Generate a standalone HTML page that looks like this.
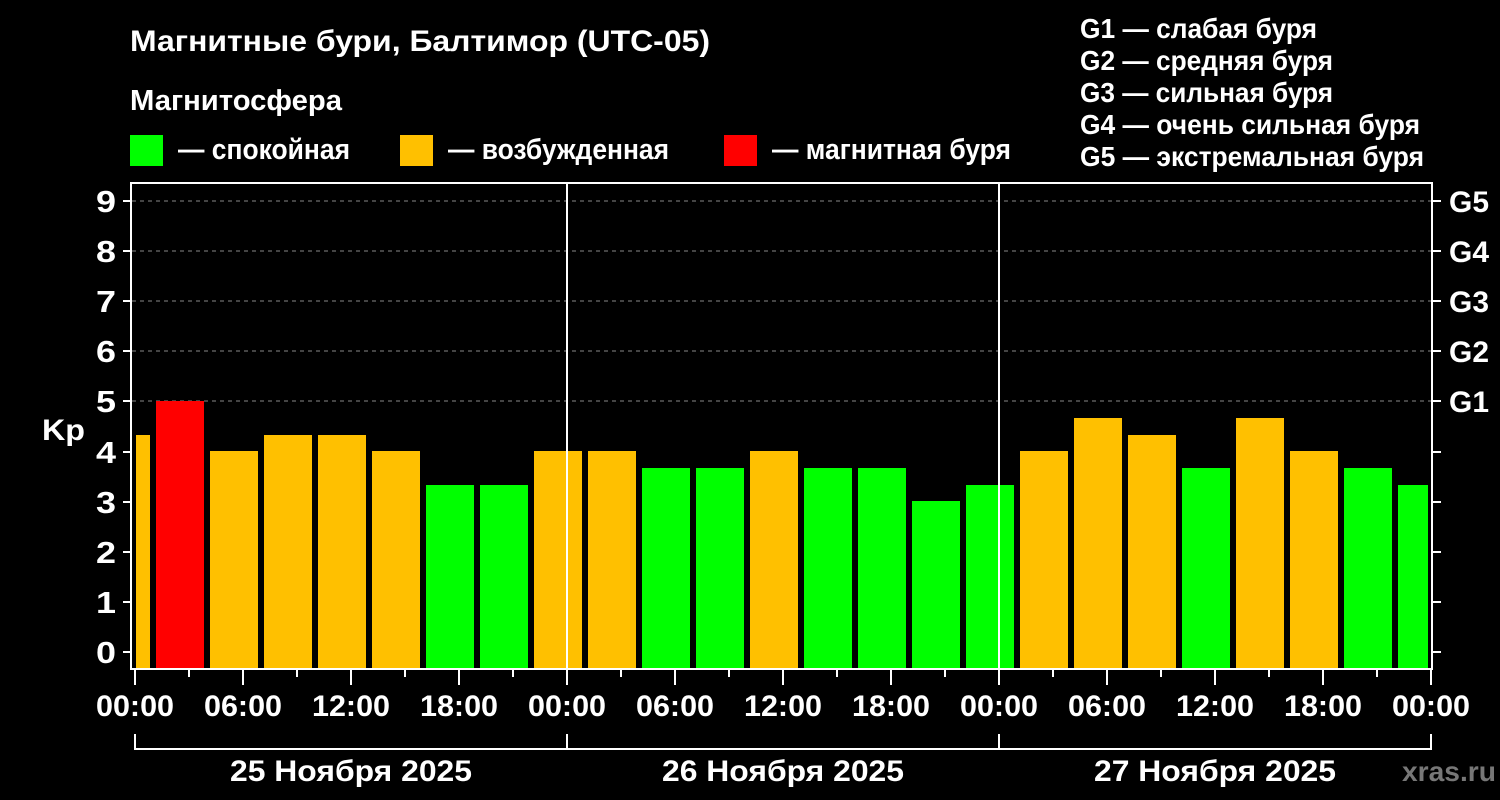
<!DOCTYPE html>
<html><head><meta charset="utf-8"><style>
html,body{margin:0;padding:0;background:#000;width:1500px;height:800px;overflow:hidden}
svg{display:block}
text{font-family:"Liberation Sans",Arial,sans-serif;font-weight:bold;fill:#fff}
</style></head><body>
<svg width="1500" height="800" viewBox="0 0 1500 800" xmlns="http://www.w3.org/2000/svg">
<rect width="1500" height="800" fill="#000"/>
<text x="130" y="51" font-size="30" textLength="580" lengthAdjust="spacingAndGlyphs">Магнитные бури, Балтимор (UTC-05)</text>
<text x="130" y="110" font-size="29" textLength="212" lengthAdjust="spacingAndGlyphs">Магнитосфера</text>
<rect x="130" y="135" width="33" height="31" fill="#00ff00"/>
<text x="178" y="159" font-size="29" textLength="172" lengthAdjust="spacingAndGlyphs">— спокойная</text>
<rect x="400" y="135" width="33" height="31" fill="#ffc000"/>
<text x="448" y="159" font-size="29" textLength="221" lengthAdjust="spacingAndGlyphs">— возбужденная</text>
<rect x="724" y="135" width="33" height="31" fill="#ff0000"/>
<text x="772" y="159" font-size="29" textLength="239" lengthAdjust="spacingAndGlyphs">— магнитная буря</text>
<g font-size="28">
<text x="1080" y="38" textLength="237" lengthAdjust="spacingAndGlyphs">G1 — слабая буря</text>
<text x="1080" y="70" textLength="253" lengthAdjust="spacingAndGlyphs">G2 — средняя буря</text>
<text x="1080" y="102" textLength="253" lengthAdjust="spacingAndGlyphs">G3 — сильная буря</text>
<text x="1080" y="134" textLength="340" lengthAdjust="spacingAndGlyphs">G4 — очень сильная буря</text>
<text x="1080" y="166" textLength="344" lengthAdjust="spacingAndGlyphs">G5 — экстремальная буря</text>
</g>
<g stroke="#888" stroke-width="1" stroke-dasharray="4,4">
<line x1="132" y1="201" x2="1431" y2="201"/>
<line x1="132" y1="251" x2="1431" y2="251"/>
<line x1="132" y1="301" x2="1431" y2="301"/>
<line x1="132" y1="351" x2="1431" y2="351"/>
<line x1="132" y1="401" x2="1431" y2="401"/>
</g>
<g>
<rect x="136" y="435" width="14" height="233" fill="#ffc000"/>
<rect x="156" y="401" width="48" height="267" fill="#ff0000"/>
<rect x="210" y="451" width="48" height="217" fill="#ffc000"/>
<rect x="264" y="435" width="48" height="233" fill="#ffc000"/>
<rect x="318" y="435" width="48" height="233" fill="#ffc000"/>
<rect x="372" y="451" width="48" height="217" fill="#ffc000"/>
<rect x="426" y="485" width="48" height="183" fill="#00ff00"/>
<rect x="480" y="485" width="48" height="183" fill="#00ff00"/>
<rect x="534" y="451" width="48" height="217" fill="#ffc000"/>
<rect x="588" y="451" width="48" height="217" fill="#ffc000"/>
<rect x="642" y="468" width="48" height="200" fill="#00ff00"/>
<rect x="696" y="468" width="48" height="200" fill="#00ff00"/>
<rect x="750" y="451" width="48" height="217" fill="#ffc000"/>
<rect x="804" y="468" width="48" height="200" fill="#00ff00"/>
<rect x="858" y="468" width="48" height="200" fill="#00ff00"/>
<rect x="912" y="501" width="48" height="167" fill="#00ff00"/>
<rect x="966" y="485" width="48" height="183" fill="#00ff00"/>
<rect x="1020" y="451" width="48" height="217" fill="#ffc000"/>
<rect x="1074" y="418" width="48" height="250" fill="#ffc000"/>
<rect x="1128" y="435" width="48" height="233" fill="#ffc000"/>
<rect x="1182" y="468" width="48" height="200" fill="#00ff00"/>
<rect x="1236" y="418" width="48" height="250" fill="#ffc000"/>
<rect x="1290" y="451" width="48" height="217" fill="#ffc000"/>
<rect x="1344" y="468" width="48" height="200" fill="#00ff00"/>
<rect x="1398" y="485" width="30" height="183" fill="#00ff00"/>
</g>
<g stroke="#fff" stroke-width="2" fill="none">
<line x1="131" y1="183" x2="1432" y2="183"/>
<line x1="131" y1="182" x2="131" y2="670"/>
<line x1="1432" y1="182" x2="1432" y2="670"/>
<line x1="130" y1="669" x2="1433" y2="669"/>
<line x1="567" y1="182" x2="567" y2="669"/>
<line x1="999" y1="182" x2="999" y2="669"/>
<path d="M123 652H131M123 602H131M123 552H131M123 502H131M123 452H131M123 401H131M123 351H131M123 301H131M123 251H131M123 201H131"/>
<path d="M1432 652H1441M1432 602H1441M1432 552H1441M1432 502H1441M1432 452H1441M1432 401H1441M1432 351H1441M1432 301H1441M1432 251H1441M1432 201H1441"/>
<path d="M135 669V685M243 669V685M351 669V685M459 669V685M567 669V685M675 669V685M783 669V685M891 669V685M999 669V685M1107 669V685M1215 669V685M1323 669V685M1431 669V685"/>
<path d="M189 669V677M297 669V677M405 669V677M513 669V677M621 669V677M729 669V677M837 669V677M945 669V677M1053 669V677M1161 669V677M1269 669V677M1377 669V677"/>
<path d="M135 734V750M567 734V750M999 734V750M1431 734V750M134 749H1432"/>
</g>
<g font-size="31" text-anchor="middle">
<text x="106" y="663" textLength="20" lengthAdjust="spacingAndGlyphs">0</text>
<text x="106" y="613" textLength="20" lengthAdjust="spacingAndGlyphs">1</text>
<text x="106" y="563" textLength="20" lengthAdjust="spacingAndGlyphs">2</text>
<text x="106" y="513" textLength="20" lengthAdjust="spacingAndGlyphs">3</text>
<text x="106" y="463" textLength="20" lengthAdjust="spacingAndGlyphs">4</text>
<text x="106" y="412" textLength="20" lengthAdjust="spacingAndGlyphs">5</text>
<text x="106" y="362" textLength="20" lengthAdjust="spacingAndGlyphs">6</text>
<text x="106" y="312" textLength="20" lengthAdjust="spacingAndGlyphs">7</text>
<text x="106" y="262" textLength="20" lengthAdjust="spacingAndGlyphs">8</text>
<text x="106" y="212" textLength="20" lengthAdjust="spacingAndGlyphs">9</text>
</g>
<text x="42" y="440" font-size="30" textLength="43" lengthAdjust="spacingAndGlyphs">Kp</text>
<g font-size="30">
<text x="1449" y="412" textLength="40" lengthAdjust="spacingAndGlyphs">G1</text>
<text x="1449" y="362" textLength="40" lengthAdjust="spacingAndGlyphs">G2</text>
<text x="1449" y="312" textLength="40" lengthAdjust="spacingAndGlyphs">G3</text>
<text x="1449" y="262" textLength="40" lengthAdjust="spacingAndGlyphs">G4</text>
<text x="1449" y="212" textLength="40" lengthAdjust="spacingAndGlyphs">G5</text>
</g>
<g font-size="30" text-anchor="middle">
<text x="135" y="716" textLength="78" lengthAdjust="spacingAndGlyphs">00:00</text>
<text x="243" y="716" textLength="78" lengthAdjust="spacingAndGlyphs">06:00</text>
<text x="351" y="716" textLength="78" lengthAdjust="spacingAndGlyphs">12:00</text>
<text x="459" y="716" textLength="78" lengthAdjust="spacingAndGlyphs">18:00</text>
<text x="567" y="716" textLength="78" lengthAdjust="spacingAndGlyphs">00:00</text>
<text x="675" y="716" textLength="78" lengthAdjust="spacingAndGlyphs">06:00</text>
<text x="783" y="716" textLength="78" lengthAdjust="spacingAndGlyphs">12:00</text>
<text x="891" y="716" textLength="78" lengthAdjust="spacingAndGlyphs">18:00</text>
<text x="999" y="716" textLength="78" lengthAdjust="spacingAndGlyphs">00:00</text>
<text x="1107" y="716" textLength="78" lengthAdjust="spacingAndGlyphs">06:00</text>
<text x="1215" y="716" textLength="78" lengthAdjust="spacingAndGlyphs">12:00</text>
<text x="1323" y="716" textLength="78" lengthAdjust="spacingAndGlyphs">18:00</text>
<text x="1431" y="716" textLength="78" lengthAdjust="spacingAndGlyphs">00:00</text>
<text x="351" y="781" textLength="242" lengthAdjust="spacingAndGlyphs">25 Ноября 2025</text>
<text x="783" y="781" textLength="242" lengthAdjust="spacingAndGlyphs">26 Ноября 2025</text>
<text x="1215" y="781" textLength="242" lengthAdjust="spacingAndGlyphs">27 Ноября 2025</text>
</g>
<text x="1402" y="781" font-size="28" style="fill:#777" textLength="94" lengthAdjust="spacingAndGlyphs">xras.ru</text>
</svg>
</body></html>
